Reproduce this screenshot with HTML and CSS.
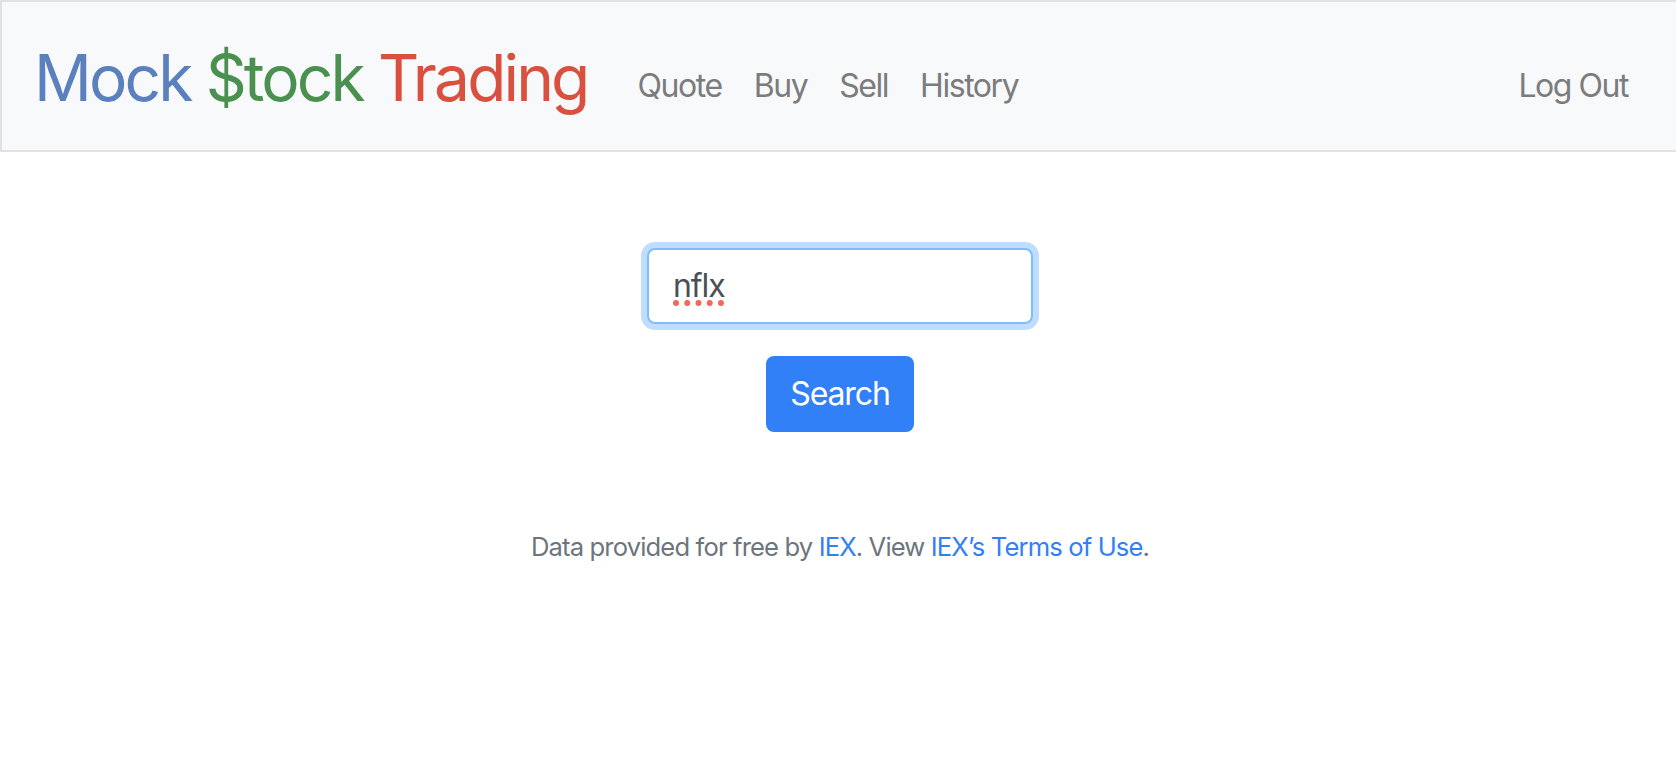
FILE: index.html
```html
<!DOCTYPE html>
<html lang="en">
<head>
<meta charset="utf-8">
<title>Mock $tock Trading: Quote</title>
<link rel="stylesheet" href="styles.css">
</head>
<body>
<nav class="navbar">
  <a class="brand" href="#"><span class="blue">Mock</span> <span class="green">$tock</span> <span class="red">Trading</span></a>
  <ul class="nav-left">
    <li><a class="nav-link" href="#">Quote</a></li>
    <li><a class="nav-link" href="#">Buy</a></li>
    <li><a class="nav-link" href="#">Sell</a></li>
    <li><a class="nav-link" href="#">History</a></li>
  </ul>
  <ul class="nav-right">
    <li><a class="nav-link" href="#">Log Out</a></li>
  </ul>
</nav>
<main class="main">
  <form class="quote-form">
    <div class="form-group">
      <div class="input"><span class="typo">nflx</span></div>
    </div>
    <button class="btn" type="button">Search</button>
  </form>
</main>
<footer class="footer">
  Data provided for free by <a href="#">IEX</a>. View <a href="#">IEX’s Terms of Use</a>.
</footer>
</body>
</html>
```
FILE: styles.css
```css
* { box-sizing: border-box; }
html, body { margin: 0; }
body {
  font-family: Inter, "Noto Sans", sans-serif;
  color: #212529;
  background: #fff;
  width: 1676px;
  height: 772px;
  overflow: hidden;
}
a { text-decoration: none; }

.navbar {
  display: flex;
  align-items: center;
  height: 152px;
  padding: 0 32px;
  background: #f8f9fa;
  border: 2px solid #dee2e6;
  border-right: none;
}
.brand {
  font-size: 64px;
  line-height: 96px;
  letter-spacing: -2.85px;
  padding-top: 4px;
  margin-right: 34px;
}
.blue { color: #5a80bd; }
.green { color: #4a9150; }
.red { color: #d9503f; }

.nav-left, .nav-right {
  display: flex;
  list-style: none;
  margin: 0;
  padding: 0;
}
.nav-right { margin-left: auto; }
.nav-link {
  display: block;
  padding: 26px 16px 6px;
  font-size: 32px;
  line-height: 48px;
  letter-spacing: -1.45px;
  color: #7b7c7d;
}

.main {
  padding: 96px 0;
  display: flex;
  flex-direction: column;
  align-items: center;
}
.quote-form {
  display: flex;
  flex-direction: column;
  align-items: center;
  margin-left: 4px;
}
.form-group { margin-bottom: 32px; }
.input {
  width: 386px;
  height: 76px;
  padding: 12px 24px;
  font-size: 32px;
  line-height: 48px;
  letter-spacing: -1.1px;
  color: #495057;
  background: #fff;
  border: 2px solid #80bdff;
  border-radius: 8px;
  box-shadow: 0 0 0 6px rgba(0, 123, 255, 0.25);
}
.typo {
  text-decoration-line: underline;
  text-decoration-style: dotted;
  text-decoration-color: #ef6a5c;
  text-decoration-thickness: 6px;
  text-underline-offset: 3px;
}
.btn {
  width: 148px;
  height: 76px;
  padding: 0;
  font-family: inherit;
  font-size: 32px;
  line-height: 48px;
  letter-spacing: -1.1px;
  color: #fff;
  background: #3280f7;
  border: none;
  border-radius: 8px;
}

.footer {
  text-align: center;
  font-size: 25.6px;
  line-height: 38px;
  letter-spacing: -0.86px;
  color: #6c757d;
  margin-left: 4px;
}
.footer a { color: #3280f7; }
```
